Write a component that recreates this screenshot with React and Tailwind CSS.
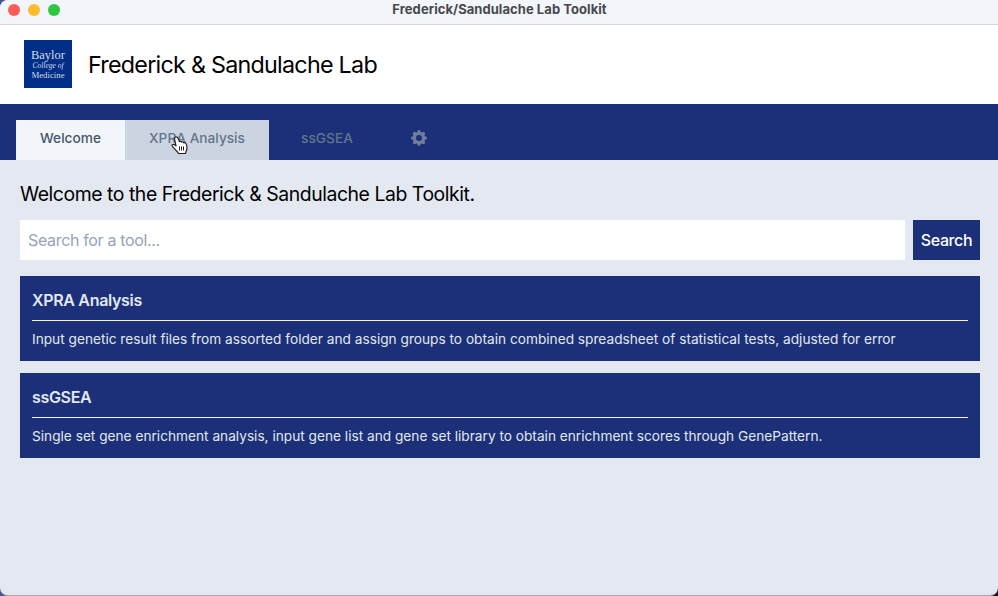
import { HiCog } from "react-icons/hi";

const tools = [
  {
    name: "XPRA Analysis",
    text: "Input genetic result files from assorted folder and assign groups to obtain combined spreadsheet of statistical tests, adjusted for error",
  },
  {
    name: "ssGSEA",
    text: "Single set gene enrichment analysis, input gene list and gene set library to obtain enrichment scores through GenePattern.",
  },
];

function TitleBar() {
  return (
    <div className="relative flex h-[25px] shrink-0 items-start justify-center border-b border-[#d7d9de] bg-[#f2f5fa] pl-px">
      <div className="absolute top-1 left-2 flex gap-2">
        <span className="size-3 rounded-full bg-[#fc5b57]" />
        <span className="size-3 rounded-full bg-[#fdbb2e]" />
        <span className="size-3 rounded-full bg-[#2bc840]" />
      </div>
      <span className="text-[13px] leading-[19px] font-bold tracking-[0.06px] whitespace-nowrap text-[#48494c]">
        Frederick/Sandulache Lab Toolkit
      </span>
    </div>
  );
}

function Logo() {
  return (
    <div className="flex size-12 flex-col items-center bg-[#002d85] pt-2 font-['Liberation_Serif',serif] text-[#d5dcec]">
      <span className="text-[12.5px] leading-[14px]">Baylor</span>
      <span className="text-[7.5px] leading-[8px] italic">College of</span>
      <span className="text-[8.8px] leading-[10px]">Medicine</span>
    </div>
  );
}

function HandCursor() {
  return (
    <svg className="absolute top-4 left-[46px]" width="18" height="20" viewBox="0 0 18 20">
      <path
        d="M4.500 1c1-.5 2 0 2.400 1l1.500 3.600c.9-.5 1.800-.3 2.200.5.9-.5 1.900-.1 2.200.7 1.100-.3 2.100.1 2.400 1.100.5 1.500 1 3.100.7 4.900-.2 1.500-1.200 2.300-1.300 4.700H7.500c-.5-1.600-2-2.400-3-3.600L1.400 10.300c-.9-1.300.5-2.600 1.800-1.700l1.800 1.200L3.600 3c-.2-.9.1-1.600.9-2Z"
        fill="#fff"
        stroke="#222"
        strokeWidth="1.2"
        strokeLinejoin="round"
      />
      <path d="M8.500 10.500v4M10.500 10.500v4M12.500 10.500v4" stroke="#222" strokeWidth="1" />
    </svg>
  );
}

export default function App() {
  return (
    <div className="h-[596px] w-[998px] bg-linear-to-r from-[#46559b] to-[#14161c]">
      <div className="flex h-[596px] flex-col overflow-hidden rounded-l-[8px] rounded-br-[8px] border-b border-[#a3a7b0] bg-[#e3e8f1] font-[Inter,sans-serif]">
        <TitleBar />
        <header className="flex h-[79px] shrink-0 items-start gap-4 bg-white px-6 pt-[15px]">
          <Logo />
          <h1 className="text-[23.3px] leading-[49px] tracking-[-0.74px] text-black">
            Frederick &amp; Sandulache Lab
          </h1>
        </header>
        <nav className="flex h-14 shrink-0 items-end bg-[#1b3078] pl-4 text-[13.7px] leading-5 font-medium">
          <div className="flex h-10 w-[109px] items-center justify-center bg-[#f2f5fa] pb-1 text-[#475569]">
            Welcome
          </div>
          <div className="relative flex h-10 w-36 items-center justify-center bg-[#cdd4e1] pb-1 text-[#64748b]">
            XPRA Analysis
            <HandCursor />
          </div>
          <div className="flex h-10 w-[116px] items-center justify-center pb-1 text-[#64748b]">ssGSEA</div>
          <div className="flex h-10 w-[68px] items-center justify-center pb-1 text-[#6f7e9e]">
            <HiCog size={20} />
          </div>
        </nav>
        <main className="flex flex-col pt-5 pr-[18px] pl-5">
          <h2 className="text-[19.4px] leading-7 tracking-[-0.44px] text-black">
            Welcome to the Frederick &amp; Sandulache Lab Toolkit.
          </h2>
          <div className="mt-3 flex gap-2">
            <input
              className="h-10 min-w-0 flex-1 bg-white px-2 tracking-[-0.34px] placeholder:text-[#94a3b8]"
              placeholder="Search for a tool..."
            />
            <button className="h-10 w-[67px] bg-[#1b3078] font-medium tracking-[-0.4px] text-white">
              Search
            </button>
          </div>
          <div className="mt-4 flex flex-col gap-3">
            {tools.map((tool) => (
              <section key={tool.name} className="h-[85px] bg-[#1b3078] p-3 text-[#e2e8f0]">
                <h3 className="h-[33px] border-b border-[#f1f5f9] text-base font-semibold tracking-[-0.32px]">
                  {tool.name}
                </h3>
                <p className="mt-2 text-[13.68px] leading-5 whitespace-nowrap">{tool.text}</p>
              </section>
            ))}
          </div>
        </main>
      </div>
    </div>
  );
}
